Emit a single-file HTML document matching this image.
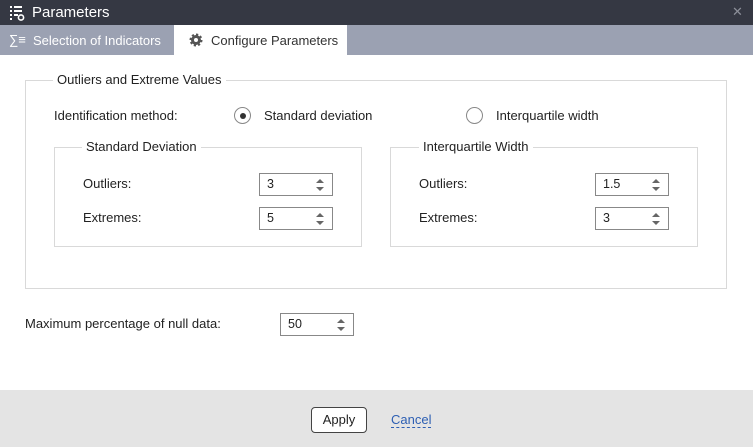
<!DOCTYPE html>
<html><head><style>
*{box-sizing:border-box;margin:0;padding:0}
body{width:753px;height:447px;position:relative;font-family:"Liberation Sans",sans-serif;font-size:13px;color:#222;background:#fff;overflow:hidden}
.abs{position:absolute}
.title{left:0;top:0;width:753px;height:25px;background:#353843;color:#fff;font-size:15px}
.tabs{left:0;top:25px;width:753px;height:30px;background:#9ba1b2}
.fs{position:absolute;border:1px solid #d9d9d9}
.lg{position:absolute;background:#fff;padding:0 4px;top:-8px;line-height:14px}
.inp{position:absolute;width:74px;height:23px;border:1px solid #888;background:#fff;padding-left:7px;line-height:21px;font-size:12.5px}
.inp:after{content:"";position:absolute;right:8px;top:5px;border:4px solid transparent;border-bottom:4px solid #666;border-top:0}
.inp:before{content:"";position:absolute;right:8px;top:13px;border:4px solid transparent;border-top:4px solid #666;border-bottom:0}
.t{position:absolute;line-height:14px}
.radio{position:absolute;width:17px;height:17px;border:1px solid #888;border-radius:50%;background:#fff}
</style></head><body>
<div class="abs title">
 <svg class="abs" style="left:9px;top:5px" width="16" height="16" viewBox="0 0 16 16" fill="#fff"><rect x="1" y="1" width="2" height="2"/><rect x="5" y="1" width="8" height="2"/><rect x="1" y="5" width="2" height="2"/><rect x="5" y="5" width="8" height="2"/><rect x="1" y="9" width="2" height="2"/><rect x="5" y="9" width="4" height="2"/><rect x="1" y="13" width="2" height="2"/><circle cx="12" cy="12.5" r="2.6" fill="none" stroke="#fff" stroke-width="1.6"/></svg>
 <span class="abs" style="left:32px;top:4px">Parameters</span>
 <span class="abs" style="left:732px;top:4px;color:#8c8f99;font-size:13px">✕</span>
</div>
<div class="abs tabs">
 <span class="abs" style="left:9px;top:7px;color:#fff;font-size:13px">∑≡</span>
 <span class="abs" style="left:33px;top:8px;color:#fff;font-size:13px">Selection of Indicators</span>
 <div class="abs" style="left:174px;top:0;width:173px;height:30px;background:#fff">
  <svg class="abs" style="left:15px;top:8px" width="14" height="14" viewBox="0 0 14 14"><circle cx="7" cy="7" r="5" fill="#555" stroke="#555" stroke-width="3" stroke-dasharray="2 1.9"/><circle cx="7" cy="7" r="2" fill="#fff"/></svg>
  <span class="abs" style="left:37px;top:8px;font-size:13px;color:#333">Configure Parameters</span>
 </div>
</div>
<div class="fs" style="left:25px;top:80px;width:702px;height:209px">
 <span class="lg" style="left:27px">Outliers and Extreme Values</span>
</div>
<span class="t" style="left:54px;top:109px">Identification method:</span>
<div class="radio" style="left:234px;top:107px"><div style="position:absolute;left:5px;top:5px;width:6px;height:6px;border-radius:50%;background:#333"></div></div>
<span class="t" style="left:264px;top:109px">Standard deviation</span>
<div class="radio" style="left:466px;top:107px"></div>
<span class="t" style="left:496px;top:109px">Interquartile width</span>
<div class="fs" style="left:54px;top:147px;width:308px;height:100px"><span class="lg" style="left:27px">Standard Deviation</span></div>
<span class="t" style="left:83px;top:177px">Outliers:</span>
<span class="t" style="left:83px;top:211px">Extremes:</span>
<div class="inp" style="left:259px;top:173px">3</div>
<div class="inp" style="left:259px;top:207px">5</div>
<div class="fs" style="left:390px;top:147px;width:308px;height:100px"><span class="lg" style="left:28px">Interquartile Width</span></div>
<span class="t" style="left:419px;top:177px">Outliers:</span>
<span class="t" style="left:419px;top:211px">Extremes:</span>
<div class="inp" style="left:595px;top:173px">1.5</div>
<div class="inp" style="left:595px;top:207px">3</div>
<span class="t" style="left:25px;top:317px">Maximum percentage of null data:</span>
<div class="inp" style="left:280px;top:313px">50</div>
<div class="abs" style="left:0;top:390px;width:753px;height:57px;background:#e4e4e4">
 <div class="abs" style="left:311px;top:17px;width:56px;height:26px;border:1px solid #444;border-radius:4px;background:#fff;text-align:center;line-height:23px;font-size:13px">Apply</div>
 <span class="abs" style="left:391px;top:22px;color:#2d5fb3;font-size:13px;border-bottom:1px dashed #2d5fb3;line-height:15px">Cancel</span>
</div>
</body></html>
